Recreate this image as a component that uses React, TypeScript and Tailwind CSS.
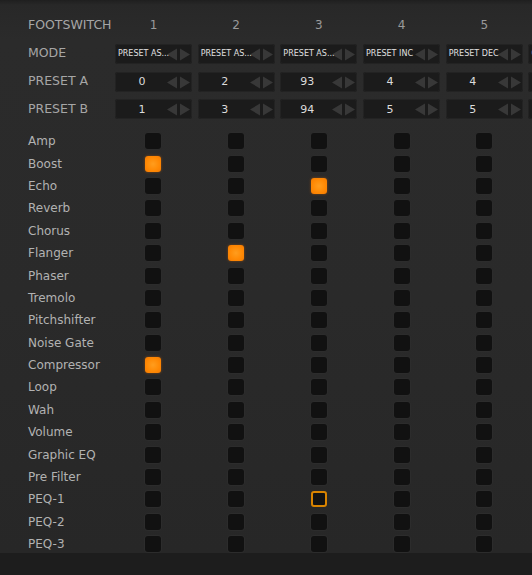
import React from 'react';

// ---------------------------------------------------------------------------
// Data
// ---------------------------------------------------------------------------

const COLUMNS = [
  { id: 1, mode: 'PRESET AS...', a: '0', b: '1' },
  { id: 2, mode: 'PRESET AS...', a: '2', b: '3' },
  { id: 3, mode: 'PRESET AS...', a: '93', b: '94' },
  { id: 4, mode: 'PRESET INC', a: '4', b: '5' },
  { id: 5, mode: 'PRESET DEC', a: '4', b: '5' },
  { id: 6, mode: 'CC TOGGLE', a: '6', b: '7' },
];

const EFFECTS = [
  'Amp',
  'Boost',
  'Echo',
  'Reverb',
  'Chorus',
  'Flanger',
  'Phaser',
  'Tremolo',
  'Pitchshifter',
  'Noise Gate',
  'Compressor',
  'Loop',
  'Wah',
  'Volume',
  'Graphic EQ',
  'Pre Filter',
  'PEQ-1',
  'PEQ-2',
  'PEQ-3',
];

type CellState = 'off' | 'on' | 'focus';

// effect -> column -> state
const STATES: Record<string, Record<number, CellState>> = {
  Boost: { 1: 'on' },
  Echo: { 3: 'on' },
  Flanger: { 2: 'on' },
  Compressor: { 1: 'on' },
  'PEQ-1': { 3: 'focus' },
};

// ---------------------------------------------------------------------------
// Pieces
// ---------------------------------------------------------------------------

function Arrows() {
  return (
    <svg width="23" height="13" viewBox="0 0 23 13" className="absolute right-[2px] top-[4px]">
      <polygon points="0,6.5 10,0.5 10,12.5" fill="#383838" />
      <polygon points="13,0.5 23,6.5 13,12.5" fill="#383838" />
    </svg>
  );
}

function Spinner({ value, left = false }: { value: string; left?: boolean }) {
  return (
    <div className="relative flex h-[20px] w-[77px] items-center overflow-hidden rounded-[3px] bg-[#1b1b1b] shadow-[inset_0_0_0_1px_#232323]">
      {left ? (
        <span className="relative z-10 whitespace-nowrap pl-[3px] text-[8px] leading-none text-[#e0e0e0]">
          {value}
        </span>
      ) : (
        <span className="w-[54px] text-center text-[11px] leading-none text-[#dcdcdc]">{value}</span>
      )}
      <Arrows />
    </div>
  );
}

function Check({ state }: { state: CellState }) {
  if (state === 'on') {
    return (
      <div className="h-[16px] w-[16px] rounded-[3px] bg-[radial-gradient(circle_at_50%_50%,#ff9d1e_0%,#ff8a05_55%,#f57a00_100%)] shadow-[0_0_3px_#ff7a0066]" />
    );
  }
  if (state === 'focus') {
    return <div className="h-[16px] w-[16px] rounded-[3px] border-2 border-[#d88300] bg-[#121212]" />;
  }
  return <div className="h-[16px] w-[16px] rounded-[3px] bg-[#111111] shadow-[0_0_0_1px_#2c2c2c]" />;
}

// ---------------------------------------------------------------------------
// App
// ---------------------------------------------------------------------------

export default function App() {
  const grid = 'grid grid-cols-[81.3px_repeat(6,77px)] gap-x-[5.7px] items-center';

  return (
    <div className="h-[575px] w-[532px] overflow-hidden bg-[#1d1d1d] font-['DejaVu_Sans',sans-serif]">
      <div className="h-[553px] overflow-hidden bg-[linear-gradient(#1f1f1f_0px,#282828_5px,#2b2b2b_40px,#2a2a2a_300px,#272727_553px)] pl-[28px] pt-[11px]">
        {/* header */}
        <div className={`${grid} h-[28px]`}>
          <span className="whitespace-nowrap text-[12.5px] text-[#a6a6a6]">FOOTSWITCH</span>
          {COLUMNS.map((c) => (
            <span key={c.id} className="text-center text-[12px] text-[#9a9a9a]">
              {c.id}
            </span>
          ))}
        </div>
        <div className={`${grid} h-[29px]`}>
          <span className="text-[12.5px] text-[#a6a6a6]">MODE</span>
          {COLUMNS.map((c) => (
            <Spinner key={c.id} value={c.mode} left />
          ))}
        </div>
        <div className={`${grid} h-[27px]`}>
          <span className="text-[12.5px] text-[#a6a6a6]">PRESET A</span>
          {COLUMNS.map((c) => (
            <Spinner key={c.id} value={c.a} />
          ))}
        </div>
        <div className={`${grid} h-[28px]`}>
          <span className="text-[12.5px] text-[#a6a6a6]">PRESET B</span>
          {COLUMNS.map((c) => (
            <Spinner key={c.id} value={c.b} />
          ))}
        </div>

        {/* effect matrix */}
        <div className="mt-[7px]">
          {EFFECTS.map((fx) => (
            <div key={fx} className={`${grid} h-[22.4px]`}>
              <span className="text-[12px] text-[#b2b2b2]">{fx}</span>
              {COLUMNS.map((c) => (
                <div key={c.id} className="flex justify-center">
                  <Check state={STATES[fx]?.[c.id] ?? 'off'} />
                </div>
              ))}
            </div>
          ))}
        </div>
      </div>
    </div>
  );
}
